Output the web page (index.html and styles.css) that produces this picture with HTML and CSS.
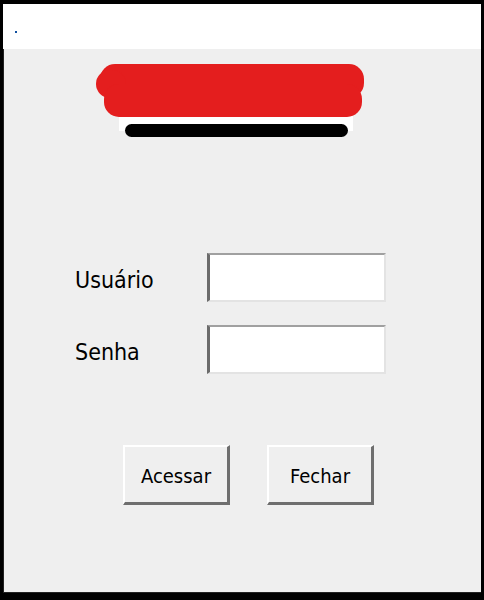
FILE: index.html
```html
<!DOCTYPE html>
<html lang="pt">
<head>
<meta charset="utf-8">
<title>Login</title>
<link rel="stylesheet" href="styles.css">
</head>
<body>
<div class="frame">
  <div class="titlebar"><span class="dot"></span></div>
  <div class="main">
    <div class="logo">
      <svg width="268" height="74" viewBox="0 0 268 74" xmlns="http://www.w3.org/2000/svg">
        <rect x="23" y="50" width="234" height="17" fill="#ffffff"/>
        <rect x="4" y="0" width="264" height="34" rx="15" fill="#e41e1e"/>
        <rect x="0" y="6" width="30" height="28" rx="14" fill="#e41e1e"/>
        <rect x="8" y="20" width="258" height="33" rx="15" fill="#e41e1e"/>
        <rect x="29" y="60" width="223" height="13" rx="6.5" fill="#000000"/>
      </svg>
    </div>
    <div class="form">
      <div class="row">
        <label class="label" for="u">Usuário</label>
        <input class="field" id="u" type="text">
      </div>
      <div class="row">
        <label class="label" for="s">Senha</label>
        <input class="field" id="s" type="password">
      </div>
    </div>
    <div class="buttons">
      <button class="btn">Acessar</button>
      <button class="btn">Fechar</button>
    </div>
  </div>
</div>
</body>
</html>
```
FILE: styles.css
```css
html, body {
  margin: 0;
  padding: 0;
  background: #000000;
}
body {
  width: 484px;
  height: 600px;
  overflow: hidden;
}
.frame {
  box-sizing: border-box;
  width: 484px;
  height: 600px;
  padding: 4px 3px 7px 3px;
  display: flex;
  flex-direction: column;
}
.titlebar {
  height: 45px;
  background: #ffffff;
  position: relative;
  flex: none;
}
.dot {
  display: block;
  width: 2px;
  height: 2px;
  background: #1050a0;
  margin: 27px 0 0 12px;
}
.main {
  flex: 1;
  background: #efefef;
  display: flex;
  flex-direction: column;
  border-bottom: 1px solid #222222;
  border-left: 1px solid #222222;
}
.logo {
  margin: 15px 0 0 92px;
  height: 74px;
  line-height: 0;
}
.form {
  margin-top: 115px;
  padding-left: 71px;
  display: flex;
  flex-direction: column;
  gap: 23px;
}
.row {
  display: flex;
  align-items: center;
}
.label {
  width: 132px;
  font-family: "DejaVu Sans Condensed", "DejaVu Sans", sans-serif;
  font-stretch: condensed;
  font-size: 23px;
  color: #000000;
  padding-top: 4px;
}
.field {
  box-sizing: border-box;
  width: 179px;
  height: 49px;
  margin: 0;
  padding: 0;
  background: #ffffff;
  border-style: solid;
  border-width: 2px 2px 2px 3px;
  border-color: #a0a0a0 #e3e3e3 #e3e3e3 #6b6b6b;
  outline: none;
}
.buttons {
  margin-top: 71px;
  padding-left: 119px;
  display: flex;
  gap: 37px;
}
.btn {
  box-sizing: border-box;
  width: 107px;
  height: 60px;
  margin: 0;
  padding: 2px 0 0 0;
  background: #efefef;
  border-style: solid;
  border-width: 2px 3px 3px 2px;
  border-color: #ffffff #6e6e6e #6e6e6e #ffffff;
  font-family: "DejaVu Sans Condensed", "DejaVu Sans", sans-serif;
  font-stretch: condensed;
  font-size: 20px;
  color: #000000;
}
```
